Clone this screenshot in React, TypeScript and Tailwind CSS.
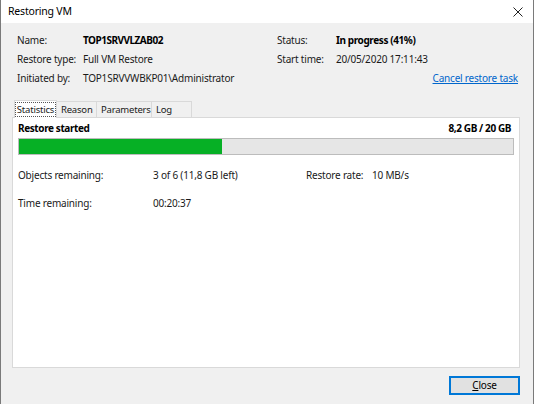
const INFO_LEFT = [
  { label: 'Name:', value: 'TOP1SRVVLZAB02', bold: true },
  { label: 'Restore type:', value: 'Full VM Restore' },
  { label: 'Initiated by:', value: 'TOP1SRVVWBKP01\\Administrator' },
];

const INFO_RIGHT = [
  { label: 'Status:', value: 'In progress (41%)', bold: true },
  { label: 'Start time:', value: '20/05/2020 17:11:43' },
];

const TABS = [
  { label: 'Statistics', w: 'w-[43px]' },
  { label: 'Reason', w: 'w-[40px]' },
  { label: 'Parameters', w: 'w-[55px]' },
  { label: 'Log', w: 'w-[40px]' },
];

export default function App() {
  const progress = 41;
  return (
    <div className="flex h-[404px] w-[534px] flex-col whitespace-nowrap border-x border-[#7a7a7a] bg-[#f0f0f0] font-['Noto_Sans',sans-serif] text-[10px] tracking-[-0.2px] text-[#1a1a1a]">
      {/* title bar */}
      <div className="flex h-[23px] items-center justify-between bg-white pl-[7px] pr-[10px]">
        <span className="text-[10.5px] text-black">Restoring VM</span>
        <svg width="10" height="10" viewBox="0 0 10 10" className="text-[#222]">
          <path d="M0.5 0.5 L9.5 9.5 M9.5 0.5 L0.5 9.5" stroke="currentColor" strokeWidth="1" />
        </svg>
      </div>

      <div className="flex flex-1 flex-col pl-[11px] pr-[13px]">
        {/* summary */}
        <div className="flex pt-[9px]">
          <div className="flex w-[265px] flex-col gap-[2px] pl-[5px]">
            {INFO_LEFT.map(row => (
              <div key={row.label} className="flex h-[17px] items-center">
                <span className="w-[66px]">{row.label}</span>
                <span className={row.bold ? 'font-bold tracking-[-0.5px] text-black' : ''}>{row.value}</span>
              </div>
            ))}
          </div>
          <div className="flex flex-1 flex-col gap-[2px]">
            {INFO_RIGHT.map(row => (
              <div key={row.label} className="flex h-[17px] items-center">
                <span className="w-[59px]">{row.label}</span>
                <span className={row.bold ? 'font-bold tracking-[-0.4px] text-black' : ''}>{row.value}</span>
              </div>
            ))}
            <div className="flex h-[17px] items-center justify-end pr-[2px]">
              <span className="text-[#0066cc] underline">Cancel restore task</span>
            </div>
          </div>
        </div>

        {/* tabs */}
        <div className="mt-[14px] flex h-[16px] items-end pl-[2px] text-[9.5px]">
          {TABS.map((t, i) => (
            <div
              key={t.label}
              className={
                i === 0
                  ? `relative z-10 -mb-px flex h-[18px] items-center justify-center border border-b-0 border-[#d9d9d9] bg-white ${t.w}`
                  : `flex h-[16px] items-center border border-l-0 border-b-0 border-[#d9d9d9] bg-[#f0f0f0] pl-[4px] ${t.w}`
              }
            >
              <span className={i === 0 ? 'border border-dotted border-[#555] px-[1px] leading-[13px]' : 'leading-[13px]'}>
                {t.label}
              </span>
            </div>
          ))}
        </div>

        {/* panel */}
        <div className="flex h-[251px] flex-col border border-[#d9d9d9] bg-white px-[5px] pt-[2px]">
          <div className="flex h-[16px] items-center justify-between pr-[3px] font-bold tracking-[-0.4px] text-black">
            <span>Restore started</span>
            <span>8,2 GB / 20 GB</span>
          </div>
          <div className="mt-[2px] h-[17px] border border-[#bcbcbc] bg-[#e6e6e6]">
            <div className="h-full bg-[#06b025]" style={{ width: `${progress}%` }} />
          </div>
          <div className="mt-[12px] flex h-[17px] items-center">
            <span className="w-[135px]">Objects remaining:</span>
            <span className="w-[153px]">3 of 6 (11,8 GB left)</span>
            <span className="w-[66px]">Restore rate:</span>
            <span>10 MB/s</span>
          </div>
          <div className="mt-[11px] flex h-[17px] items-center">
            <span className="w-[135px]">Time remaining:</span>
            <span>00:20:37</span>
          </div>
        </div>

        {/* footer */}
        <div className="flex justify-end pt-[8px]">
          <button className="flex h-[19px] w-[71px] items-center justify-center border border-[#0078d7] bg-[#e1e1e1] text-black outline outline-1 -outline-offset-2 outline-[#0078d7]">
            <span>
              <span className="underline">C</span>lose
            </span>
          </button>
        </div>
      </div>
    </div>
  );
}
